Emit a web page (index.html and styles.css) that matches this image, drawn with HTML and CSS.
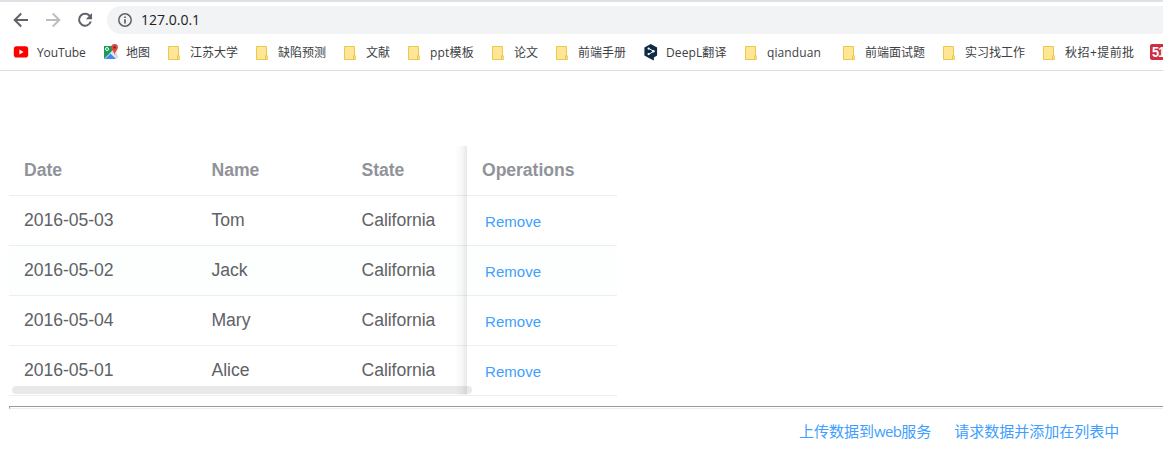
FILE: index.html
```html
<!DOCTYPE html>
<html lang="zh-CN">
<head>
<meta charset="utf-8">
<title>127.0.0.1</title>
<link rel="stylesheet" href="styles.css">
</head>
<body>
<svg width="0" height="0" class="defs"><defs>
<symbol id="folder" viewBox="0 0 13 15"><path d="M1.5.5h10v13h-10z" fill="#ffe694" stroke="#e8c84f"/><path d="M10.5 9.8h1.8v3.7h-1.8z" fill="#ffe694" stroke="#e8c84f"/></symbol>
</defs></svg>
<header class="browser">
  <div class="toolbar">
    <svg class="nav back" width="16" height="16" viewBox="0 0 16 16"><path d="M15 8H2M8.2 1.5 1.7 8l6.5 6.5" fill="none" stroke="#5f6368" stroke-width="2"/></svg>
    <svg class="nav forward" width="16" height="16" viewBox="0 0 16 16"><path d="M1 8h13M7.8 1.5 14.3 8l-6.5 6.5" fill="none" stroke="#bbbdc0" stroke-width="2"/></svg>
    <svg class="nav reload" width="16" height="16" viewBox="0 0 16 16"><path d="M13.2 4.6A6 6 0 1 0 13.8 9.5" fill="none" stroke="#5f6368" stroke-width="2"/><path d="M15 1v6.2H8.8z" fill="#5f6368"/></svg>
    <div class="address">
      <svg width="14" height="14" viewBox="0 0 14 14"><circle cx="7" cy="7" r="6.2" fill="none" stroke="#5f6368" stroke-width="1.5"/><path d="M7 6.2v4.3M7 3.4v1.7" stroke="#5f6368" stroke-width="1.7"/></svg>
      <span>127.0.0.1</span>
    </div>
  </div>
  <nav class="bookmarks">
    <a class="mark w90 site"><svg width="16" height="16" viewBox="0 0 16 16"><rect x=".8" y="2.3" width="14.4" height="11.2" rx="2.8" fill="#f00"/><path d="m6.4 5.4 4.1 2.5-4.1 2.5z" fill="#fff"/></svg><span class="youtube">YouTube</span></a>
    <a class="mark w64 site"><svg width="16" height="16" viewBox="0 0 16 16"><path d="M1 2h13v13H1z" fill="#e8eaed"/><path d="M1 2h9v4L1 15z" fill="#1a9b58"/><path d="m2 15 5.5-5.5L13 15z" fill="#4285f4"/><path d="m8.5 8.5 2-2L15 12v2.5z" fill="#d5d8dc"/><circle cx="4" cy="5" r="1.5" fill="none" stroke="#fff"/><path d="M11.6 0a3.3 3.3 0 0 0-3.3 3.3c0 3 2.8 3.7 3.3 7.7.5-4 3.3-4.7 3.3-7.7A3.3 3.3 0 0 0 11.6 0z" fill="#df4b3f"/><circle cx="11.6" cy="3.4" r="1.2" fill="#7d231d"/></svg><span class="map">地图</span></a>
    <a class="mark w88"><svg width="13" height="15"><use href="#folder"/></svg><span>江苏大学</span></a>
    <a class="mark w88"><svg width="13" height="15"><use href="#folder"/></svg><span>缺陷预测</span></a>
    <a class="mark w64"><svg width="13" height="15"><use href="#folder"/></svg><span>文献</span></a>
    <a class="mark w84"><svg width="13" height="15"><use href="#folder"/></svg><span class="ppt">ppt模板</span></a>
    <a class="mark w64"><svg width="13" height="15"><use href="#folder"/></svg><span>论文</span></a>
    <a class="mark w87"><svg width="13" height="15"><use href="#folder"/></svg><span>前端手册</span></a>
    <a class="mark w102 site"><svg width="16" height="17" viewBox="-1 0 16 17"><path d="m7.8 0 6.3 3.5v8.1l-3.2 1.9v3L7.7 15 1.4 11.5v-8z" fill="#0f2b46"/><path d="m5.6 4.4 5.2 2.9-5.2 3" fill="none" stroke="#fff"/><g fill="#fff"><circle cx="5.6" cy="4.6" r="1.1"/><circle cx="10.4" cy="7.3" r="1.2"/><circle cx="5.6" cy="10.1" r="1.1"/></g></svg><span class="deepl">DeepL翻译</span></a>
    <a class="mark w98"><svg width="13" height="15"><use href="#folder"/></svg><span class="qian">qianduan</span></a>
    <a class="mark w100"><svg width="13" height="15"><use href="#folder"/></svg><span>前端面试题</span></a>
    <a class="mark w100"><svg width="13" height="15"><use href="#folder"/></svg><span>实习找工作</span></a>
    <a class="mark w108"><svg width="13" height="15"><use href="#folder"/></svg><span class="autumn">秋招+提前批</span></a>
    <a class="job"><span>51</span></a>
  </nav>
</header>
<main>
  <div class="table">
    <div class="row head"><span>Date</span><span>Name</span><span>State</span><span>Operations</span></div>
    <div class="row"><span>2016-05-03</span><span>Tom</span><span>California</span><a>Remove</a></div>
    <div class="row tint"><span>2016-05-02</span><span>Jack</span><span>California</span><a>Remove</a></div>
    <div class="row"><span>2016-05-04</span><span>Mary</span><span>California</span><a>Remove</a></div>
    <div class="row"><span>2016-05-01</span><span>Alice</span><span>California</span><a>Remove</a></div>
    <div class="scrollbar"></div>
    <div class="shadow"></div>
  </div>
  <hr>
  <div class="actions"><a>上传数据到<span class="latin">web</span>服务</a><a>请求数据并添加在列表中</a></div>
</main>
</body>
</html>
```
FILE: styles.css
```css
* { box-sizing: border-box; }
body { margin: 0; background: #fff; height: 459px; overflow: hidden; font-family: "Liberation Sans", "Noto Sans CJK SC", sans-serif; }
.defs { display: block; }
.browser { height: 71px; border-top: 2px solid #dee1e6; border-bottom: 1px solid #dadce0; overflow: hidden; }
.toolbar { height: 36px; padding: 4px 0 4px 13px; display: flex; align-items: center; }
.nav { flex: none; margin-right: 16px; }
.reload { margin-right: 14px; }
.address { flex: 1; height: 28px; padding-left: 11px; border-radius: 14px 0 0 14px; background: #f1f3f4; display: flex; align-items: center; gap: 9px; font: 14px "Open Sans", sans-serif; color: #202124; }
.address span { padding-bottom: 1px; }
.bookmarks { height: 31px; padding-left: 13px; display: flex; align-items: center; font: 12px/16px "Open Sans", "Noto Sans CJK SC", sans-serif; color: #3c4043; white-space: nowrap; }
.mark { flex: none; display: flex; align-items: center; gap: 10px; height: 16px; }
.mark span { padding-bottom: 1px; }
.site { gap: 8px; }
.site svg { flex: none; margin-bottom: 3px; }
.youtube { letter-spacing: -0.1px; }
.map { margin-left: -1px; }
.ppt { letter-spacing: 0.2px; }
.deepl { letter-spacing: 0.1px; }
.qian { letter-spacing: 0.1px; }
.autumn { letter-spacing: 0.45px; }
.w64 { width: 64px; }
.w84 { width: 84px; }
.w87 { width: 87px; }
.w88 { width: 88px; }
.w90 { width: 90px; }
.w98 { width: 98px; }
.w100 { width: 100px; }
.w102 { width: 102px; }
.w108 { width: 108px; }
.job { flex: none; width: 18px; height: 16px; margin-bottom: 3px; border-radius: 2px; background: #cf2e3f; color: #fff; font: bold 15px/16px "Liberation Sans", sans-serif; padding-left: 2px; letter-spacing: -1px; }
.job span { display: inline-block; transform: scaleX(.85); transform-origin: left; }
main { padding: 75px 0 0 9px; }
.table { position: relative; width: 608px; height: 250px; color: #606266; font-size: 17.6px; letter-spacing: -0.05px; }
.row { display: grid; grid-template-columns: 187.5px 150px 120.5px 150px; height: 50px; border-bottom: 1px solid #ebeef5; align-items: center; line-height: 24px; }
.row span { padding: 0 0 2px 15px; }
.row a { padding: 3px 0 0 18px; font-size: 15px; letter-spacing: 0.05px; }
.head { color: #909399; font-weight: bold; }
.tint { background: #fcfffe; }
.scrollbar { position: absolute; left: 3px; bottom: 2px; width: 460px; height: 8px; border-radius: 4px; background: rgba(0, 0, 0, .085); }
.shadow { position: absolute; left: 446px; top: 0; width: 12px; height: 249px; background: linear-gradient(to right, transparent, rgba(0, 0, 0, .035) 60%, rgba(0, 0, 0, .09)); }
hr { height: 3px; margin: 10px 0 0; border: 1px solid #999; border-bottom-color: #eee; border-right: 0; }
.actions { display: flex; gap: 23px; padding: 11px 0 0 790px; font: 15px/22px "Open Sans", "Noto Sans CJK SC", sans-serif; }
.latin { letter-spacing: -0.7px; }
.row a, .actions a { color: #409eff; white-space: nowrap; }
```
